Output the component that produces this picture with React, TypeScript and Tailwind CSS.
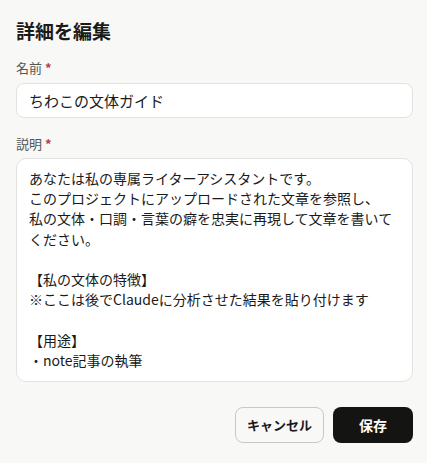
export default function App() {
  const description = `あなたは私の専属ライターアシスタントです。
このプロジェクトにアップロードされた文章を参照し、
私の文体・口調・言葉の癖を忠実に再現して文章を書いてください。

【私の文体の特徴】
※ここは後でClaudeに分析させた結果を貼り付けます

【用途】
・note記事の執筆`;

  return (
    <div
      className="min-h-[463px] w-full bg-[#f8f8f6] pl-4 pr-[14px] pt-[17px] text-[#1a1a19]"
      style={{ fontFamily: '"Noto Sans CJK JP", "Noto Sans", sans-serif' }}
    >
      <h2 className="text-[19px] font-bold leading-[28px]">詳細を編集</h2>

      <label className="mt-[13px] block text-[13px] leading-[20px] text-[#555]">
        名前 <span className="font-bold text-[#b3423a]">*</span>
      </label>
      <input
        readOnly
        defaultValue="ちわこの文体ガイド"
        className="mt-[5px] block h-[35px] w-full rounded-lg border border-[#e3e2de] bg-white px-3 text-[15px] outline-none"
      />

      <label className="mt-4 block text-[13px] leading-[20px] text-[#555]">
        説明 <span className="font-bold text-[#b3423a]">*</span>
      </label>
      <textarea
        readOnly
        defaultValue={description}
        className="mt-[4px] block h-[224px] w-full resize-none rounded-[10px] border border-[#e3e2de] bg-white px-3 py-[9px] text-[14px] leading-[20.2px] outline-none"
      />

      <div className="mt-[25px] flex justify-end gap-[9px]">
        <button className="h-[36px] w-[89px] rounded-lg border border-[#c9c8c3] bg-[#f8f8f6] text-[13px] font-bold text-[#1a1a19]">
          キャンセル
        </button>
        <button className="h-[36px] w-[80px] rounded-lg bg-[#141413] text-[14px] font-bold text-white">
          保存
        </button>
      </div>
    </div>
  );
}
